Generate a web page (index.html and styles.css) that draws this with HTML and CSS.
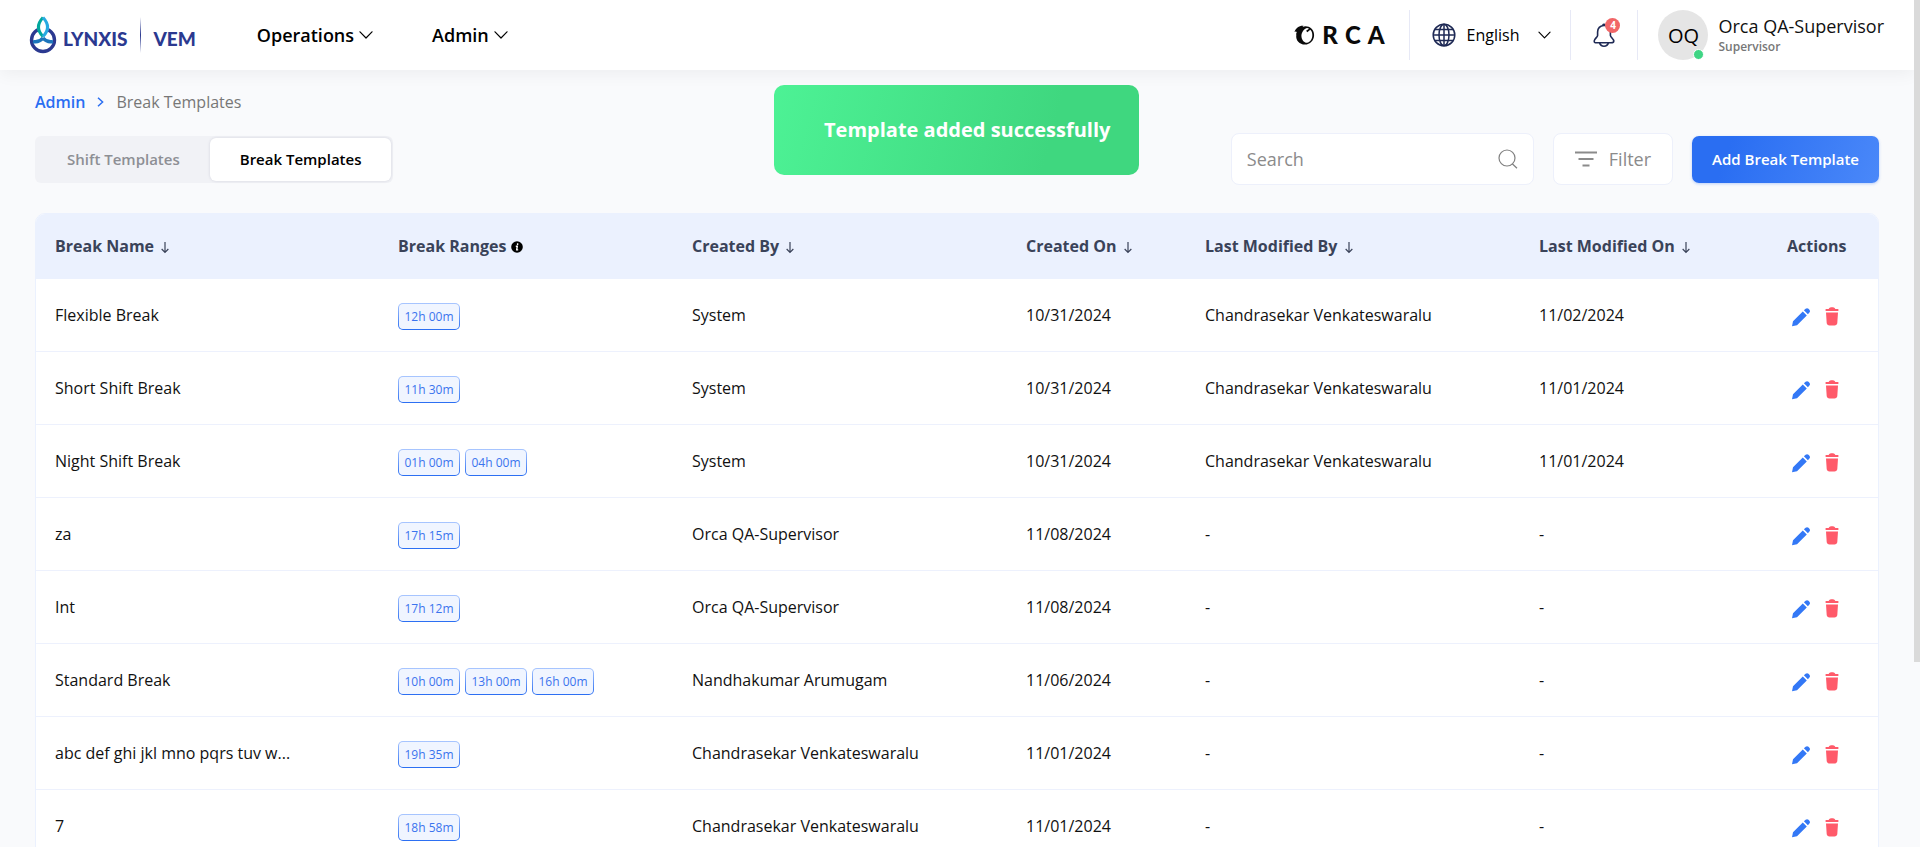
FILE: index.html
```html
<!DOCTYPE html>
<html lang="en">
<head>
<meta charset="utf-8">
<meta name="viewport" content="width=device-width, initial-scale=1">
<title>Break Templates</title>
<link rel="stylesheet" href="styles.css">
</head>
<body>
<svg class="sprite" aria-hidden="true">
  <symbol id="chevron" viewBox="0 0 14 8"><path d="M1 0.8 7 7 13 0.8" fill="none" stroke="currentColor" stroke-width="1.2" stroke-linecap="round" stroke-linejoin="round"/></symbol>
  <symbol id="sort" viewBox="0 0 10 14"><path d="M5 1v11M1.4 8.6 5 12.2 8.6 8.6" fill="none" stroke="currentColor" stroke-width="1.3"/></symbol>
  <symbol id="pencil" viewBox="0 0 20 20"><path d="M1 19.200 2 14.200 11.800 4.400 15.800 8.400 6 18.200ZM12.900 3.300 14.600 1.800C15.500 1 16.700 1 17.500 1.800L18.400 2.700C19.200 3.500 19.200 4.700 18.400 5.600L16.900 7.300Z" fill="#3378f6"/></symbol>
  <symbol id="trash" viewBox="0 0 14 20"><path d="M.4 3C.4 2.300.9 2 1.600 2H3.700C4.100.9 5 .2 6 .2H8C9 .2 9.900.9 10.300 2h2.100c.7 0 1.200.3 1.200 1s-.5 1-1.200 1H1.600C.9 4 .4 3.700.4 3ZM1 5.500h12l-.7 10.500c-.1 1.600-1.300 2.500-2.800 2.500h-5c-1.500 0-2.700-.9-2.800-2.500Z" fill="#ff5a6a"/></symbol>
</svg>
<header class="topbar">
  <a class="brand" href="#" aria-label="Lynxis VEM">
    <svg class="drop" viewBox="0 0 28 38" aria-hidden="true">
      <circle cx="14" cy="24" r="11.500" fill="#fff" stroke="#2b3990" stroke-width="3.400"/>
      <path d="M4 25.500C8.500 26.500 11.500 25 14 22 16.500 25 19.500 26.500 24 25.500" fill="none" stroke="#1c75bc" stroke-width="3.400"/>
      <path d="M14 .5C7 7 6 14 14 22 22 14 21 7 14 .5Z" fill="#fff"/>
      <path d="M14 1.500C8 8 8 14.500 14 20.500" fill="none" stroke="#00a79d" stroke-width="3"/>
      <path d="M14 1.500C20 8 20 14.500 14 20.500" fill="none" stroke="#27aae1" stroke-width="3"/>
    </svg>
    <span>LYNXIS</span><i class="brand-line"></i><span>VEM</span>
  </a>
  <nav class="nav">
    <button type="button">Operations <svg class="chev"><use href="#chevron"/></svg></button>
    <button type="button">Admin <svg class="chev"><use href="#chevron"/></svg></button>
  </nav>
  <div class="tools">
    <div class="orca">
      <svg viewBox="0 0 20 20" aria-hidden="true"><path fill-rule="evenodd" d="M0 7C1 3 5 .4 9 .8L8 1.900C13 0 19.500 3 19.600 10 19.600 15.500 15.500 19.600 10.500 19.600 5 19.600 1 15.500 1.800 10 1.500 8.500 2 7.600 2.400 7Q1 6.200 0 7ZM12.500 3C9 4 6.500 8 7 12 7.500 15.500 10 18 12.500 17.800 16 17.400 18 13.500 17.800 9.800 17.800 7.600 17 5.900 15.800 4.800L12.800 7.200 11.600 5.800 14.500 3.800Q13.600 3 12.500 3Z" fill="#0a0a0a"/></svg>
      <span>R</span><span>C</span><span>A</span>
    </div>
    <button type="button" class="language">
      <svg class="globe" viewBox="0 0 24 24" fill="none" stroke="#1f2a55" stroke-width="1.500" aria-hidden="true"><circle cx="12" cy="12" r="10.800"/><ellipse cx="12" cy="12" rx="5" ry="10.800"/><path d="M12 1v22M1 12h22M2.800 6.500h18.400M2.800 17.500h18.400"/></svg>
      <span>English</span><svg class="chev"><use href="#chevron"/></svg>
    </button>
    <button type="button" class="bell" aria-label="Notifications">
      <svg viewBox="0 0 22 24" fill="none" stroke="#1f2a55" stroke-width="1.600" stroke-linejoin="round" aria-hidden="true"><path d="M11 2.500C7 2.500 4.600 5.400 4.600 9V12.500C4.600 14 1.200 16 1.200 18S2.500 19.800 4 19.800H18C19.500 19.800 20.800 19.800 20.800 18S17.400 14 17.400 12.500V9C17.400 5.400 15 2.500 11 2.500ZM9.600 2.400Q11 .2 12.400 2.400M6.500 19.800Q7.500 23.200 11 23.200T15.500 19.800"/></svg>
      <span class="count">4</span>
    </button>
    <div class="user">
      <div class="avatar">OQ<i></i></div>
      <div><div class="user-name">Orca QA-Supervisor</div><div class="user-role">Supervisor</div></div>
    </div>
  </div>
</header>
<div class="toast" role="status">Template added successfully</div>
<main class="page">
  <nav class="crumbs" aria-label="Breadcrumb"><a href="#">Admin</a><svg viewBox="0 0 7 10" aria-hidden="true"><path d="M1 .8 5.600 5 1 9.200" fill="none" stroke="currentColor" stroke-width="1.500"/></svg><span>Break Templates</span></nav>
  <div class="bar">
    <div class="tabs" role="tablist"><button type="button" role="tab">Shift Templates</button><button type="button" role="tab" aria-selected="true" class="active">Break Templates</button></div>
    <div class="controls">
      <label class="search"><input type="search" placeholder="Search" aria-label="Search"><svg viewBox="0 0 20 20" aria-hidden="true"><path d="M14.500 15 19 19.300M17 9A8 8 0 1 1 1 9 8 8 0 0 1 17 9Z" fill="none" stroke="#808080" stroke-width="1.200"/></svg></label>
      <button type="button" class="filter"><svg viewBox="0 0 22 16" aria-hidden="true"><path d="M0 1.500h22M3.500 8h15M7.500 14.500h7" stroke="#8b8b8b" stroke-width="1.800"/></svg>Filter</button>
      <button type="button" class="add">Add Break Template</button>
    </div>
  </div>
  <div class="card">
    <table>
      <colgroup><col class="c-name"><col class="c-ranges"><col class="c-by"><col class="c-on"><col class="c-by"><col class="c-mod"><col class="c-act"></colgroup>
      <thead><tr>
        <th>Break Name <svg class="sort"><use href="#sort"/></svg></th>
        <th>Break Ranges <svg class="info" viewBox="0 0 12 12"><circle cx="6" cy="6" r="5.800"/><path d="M6.600 2.300v1.600M4.800 5.200h1.500L5.700 8.900h1.500" fill="none" stroke="#fff" stroke-width="1.400"/></svg></th>
        <th>Created By <svg class="sort"><use href="#sort"/></svg></th>
        <th>Created On <svg class="sort"><use href="#sort"/></svg></th>
        <th>Last Modified By <svg class="sort"><use href="#sort"/></svg></th>
        <th>Last Modified On <svg class="sort"><use href="#sort"/></svg></th>
        <th>Actions</th>
      </tr></thead>
      <tbody id="rows"></tbody>
    </table>
  </div>
</main>
<div class="scroll-thumb"></div>
<script src="app.js"></script>
</body>
</html>
```
FILE: styles.css
```css
* { box-sizing: border-box; }
html, body { height: 100%; }
body { margin: 0; overflow: hidden; background: #f9fafc; color: #111; font-family: "Open Sans", "Noto Sans", sans-serif; font-size: 16px; }
button { font: inherit; color: inherit; border: 0; background: none; padding: 0; cursor: pointer; }
a { text-decoration: none; color: inherit; }
svg { flex: none; }
.sprite { display: none; }
.topbar { position: relative; height: 70px; margin-right: 6px; padding: 0 30px 0 29px; display: flex; align-items: center; background: #fff; box-shadow: 0 4px 16px rgba(0, 0, 0, 0.05); }
.brand { display: flex; align-items: center; height: 38px; color: #2b3990; font-family: Lato, sans-serif; font-weight: 900; font-size: 19px; }
.brand span { padding-top: 6px; }
.drop { width: 28px; height: 38px; margin-right: 6px; }
.brand-line { width: 1px; height: 36px; margin: 0 12px 0 13px; background: linear-gradient(transparent, #2b3990, transparent); }
.nav { display: flex; gap: 59px; margin-left: 61px; }
.nav button { display: flex; align-items: center; gap: 5px; font-size: 18px; line-height: 24px; font-weight: 600; color: #000; }
.chev { width: 14px; height: 8px; }
.tools { margin-left: auto; display: flex; align-items: center; height: 50px; }
.orca { display: flex; align-items: center; gap: 7px; margin-right: 24px; color: #0a0a0a; font-family: Lato, sans-serif; font-weight: 900; font-size: 24px; line-height: 30px; }
.orca svg { width: 21px; height: 20px; }
.language, .bell, .user { height: 50px; border-left: 1px solid #e7e9f6; display: flex; align-items: center; }
.language { padding: 0 19px 0 22px; font-weight: 500; color: #000; }
.language .chev { width: 13px; margin-left: 19px; }
.globe { width: 24px; height: 24px; margin-right: 11px; }
.bell { position: relative; padding: 0 22px; }
.bell svg { width: 22px; height: 24px; }
.count { position: absolute; right: 17px; top: 8px; width: 15px; height: 15px; border-radius: 50%; background: #f16667; color: #fff; font-size: 10px; line-height: 15px; font-weight: 700; text-align: center; }
.user { padding-left: 20px; gap: 10px; }
.avatar { position: relative; width: 50px; height: 50px; border-radius: 50%; background: #e5e5e5; color: #000; font-size: 20px; line-height: 52px; text-align: center; }
.avatar i { position: absolute; right: 4px; bottom: 0; width: 11px; height: 11px; border: 1px solid #fff; border-radius: 50%; background: #3fd584; }
.user-name { font-size: 18px; line-height: 24px; font-weight: 500; }
.user-role { font-size: 12px; line-height: 18px; font-weight: 600; color: #777; }
.toast { position: absolute; z-index: 2; left: 774px; top: 85px; padding: 0 29px 0 50px; border-radius: 10px; background: linear-gradient(105deg, #4df295, #3fd77f 75%); color: #fff; font-size: 20px; line-height: 90px; font-weight: 700; }
.page { padding: 20px 41px 0 35px; }
.crumbs { display: flex; align-items: center; gap: 12px; font-size: 16px; line-height: 24px; color: #777; }
.crumbs a { color: #2a6ef2; font-weight: 600; }
.crumbs svg { width: 7px; height: 10px; color: #2a6ef2; }
.bar { display: flex; align-items: center; justify-content: space-between; margin-top: 19px; }
.tabs { display: flex; padding: 2px; border-radius: 6px; background: #f1f2f6; font-size: 15px; font-weight: 600; }
.tabs button { height: 43px; padding: 0 30px; border-radius: 6px; color: #8d8f94; }
.tabs .active { background: #fff; color: #000; box-shadow: 0 0 3px rgba(40, 40, 80, 0.15); }
.controls { display: flex; align-items: center; gap: 19px; }
.search, .filter { display: flex; align-items: center; height: 52px; border: 1px solid #edf0fb; border-radius: 8px; background: #fff; }
.search { width: 303px; padding: 0 15px; }
.search input { flex: 1; min-width: 0; border: 0; padding: 0; outline: 0; font: 500 18px/24px "Open Sans", sans-serif; background: none; }
.search input::placeholder { color: #8b8b8b; opacity: 1; }
.search svg { width: 20px; height: 20px; }
.filter { padding: 0 21px; gap: 12px; font-size: 18px; font-weight: 500; color: #8b8b8b; }
.filter svg { width: 22px; height: 16px; }
.add { height: 47px; padding: 0 20px; border-radius: 7px; background: linear-gradient(110deg, #2a6ef2 20%, #4a88f9); box-shadow: 0 1px 3px rgba(42, 110, 242, 0.3); color: #fff; font-size: 15px; font-weight: 600; }
.card { margin-top: 28px; border: 1px solid #ebf1fe; border-radius: 10px; background: #fff; overflow: hidden; }
table { width: 100%; table-layout: fixed; border-collapse: separate; border-spacing: 0; }
.c-name { width: 343px; }
.c-ranges { width: 294px; }
.c-by { width: 334px; }
.c-on { width: 179px; }
.c-mod { width: 248px; }
th, td { padding: 0 0 0 19px; text-align: left; white-space: nowrap; }
th { height: 65px; padding-bottom: 2px; background: #ebf1fe; color: #3a4359; font-size: 16px; font-weight: 700; }
td { height: 73px; border-bottom: 1px solid #edf1fd; }
.sort { width: 10px; height: 13px; margin-left: 2px; vertical-align: -2px; }
.info { width: 12px; height: 12px; vertical-align: -1px; }
.tags { display: flex; gap: 5px; padding-top: 2px; }
.tag { min-width: 62px; height: 27px; padding: 0 5px; border: 1px solid transparent; border-radius: 5px; background: linear-gradient(#f0f5ff, #f0f5ff) padding-box, linear-gradient(#a9c6ff, #2a6ef2) border-box; color: #3b74ee; font-size: 12px; line-height: 25px; text-align: center; }
.actions { display: flex; align-items: center; gap: 14px; padding: 3px 0 0 4px; }
.actions button { display: flex; }
.pencil { width: 20px; height: 20px; }
.trash { width: 14px; height: 20px; }
.scroll-thumb { position: absolute; right: 0; top: 0; width: 6px; height: 662px; background: #dadada; }
```
FILE: app.js
```js
const rows = [
  ["Flexible Break", ["12h 00m"], "System", "10/31/2024", "Chandrasekar Venkateswaralu", "11/02/2024"],
  ["Short Shift Break", ["11h 30m"], "System", "10/31/2024", "Chandrasekar Venkateswaralu", "11/01/2024"],
  ["Night Shift Break", ["01h 00m", "04h 00m"], "System", "10/31/2024", "Chandrasekar Venkateswaralu", "11/01/2024"],
  ["za", ["17h 15m"], "Orca QA-Supervisor", "11/08/2024", "-", "-"],
  ["Int", ["17h 12m"], "Orca QA-Supervisor", "11/08/2024", "-", "-"],
  ["Standard Break", ["10h 00m", "13h 00m", "16h 00m"], "Nandhakumar Arumugam", "11/06/2024", "-", "-"],
  ["abc def ghi jkl mno pqrs tuv w...", ["19h 35m"], "Chandrasekar Venkateswaralu", "11/01/2024", "-", "-"],
  ["7", ["18h 58m"], "Chandrasekar Venkateswaralu", "11/01/2024", "-", "-"]
];
document.getElementById("rows").innerHTML = rows.map(([name, ranges, by, on, modBy, modOn]) => `<tr>
  <td>${name}</td>
  <td><div class="tags">${ranges.map(r => `<span class="tag">${r}</span>`).join("")}</div></td>
  <td>${by}</td><td>${on}</td><td>${modBy}</td><td>${modOn}</td>
  <td><div class="actions"><button type="button" aria-label="Edit"><svg class="pencil"><use href="#pencil"/></svg></button><button type="button" aria-label="Delete"><svg class="trash"><use href="#trash"/></svg></button></div></td>
</tr>`).join("");
```
